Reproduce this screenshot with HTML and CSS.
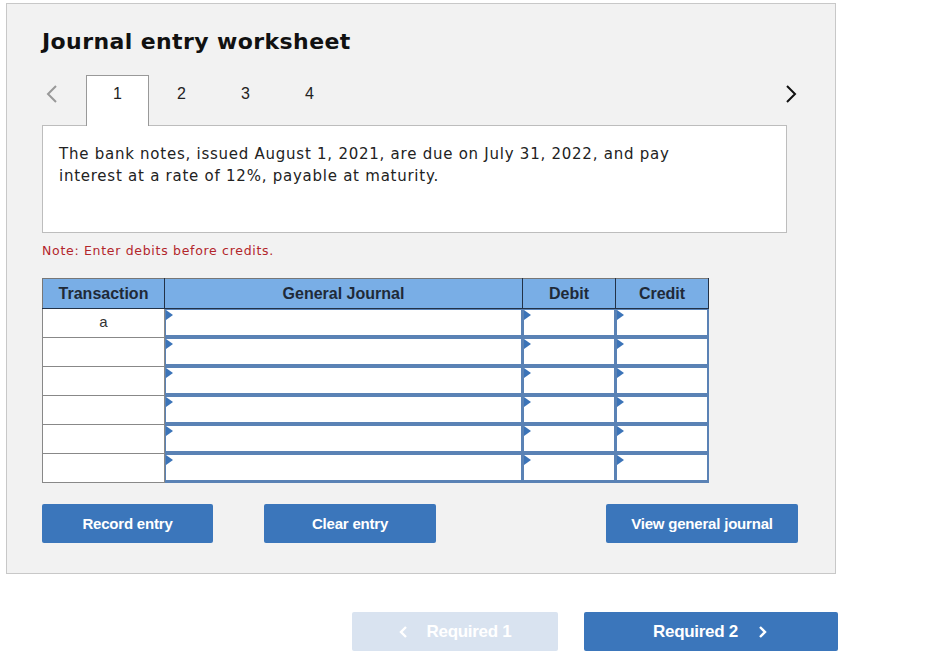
FILE: index.html
```html
<!DOCTYPE html>
<html lang="en">
<head>
    <meta charset="UTF-8">
    <title>Journal entry worksheet</title>
    <link rel="stylesheet" href="styles.css">
</head>
<body>

    <!-- Hoja de trabajo -->
    <div class="panel">
        <h1>Journal entry worksheet</h1>

        <div class="tabs">
            <span class="nav prev">
                <svg width="14" height="20" viewBox="0 0 14 20"><path d="M11 2 L3 10 L11 18" fill="none" stroke="#999" stroke-width="2"/></svg>
            </span>
            <span class="tab active">1</span>
            <span class="tab">2</span>
            <span class="tab">3</span>
            <span class="tab">4</span>
            <span class="nav next">
                <svg width="14" height="20" viewBox="0 0 14 20"><path d="M3 2 L11 10 L3 18" fill="none" stroke="#111" stroke-width="2"/></svg>
            </span>
        </div>

        <div class="question">
            The bank notes, issued August 1, 2021, are due on July 31, 2022, and pay<br>
            interest at a rate of 12%, payable at maturity.
        </div>

        <p class="note">Note: Enter debits before credits.</p>

        <table class="journal">
            <thead>
                <tr>
                    <th class="col-trans">Transaction</th>
                    <th class="col-account">General Journal</th>
                    <th class="col-amount">Debit</th>
                    <th class="col-amount">Credit</th>
                </tr>
            </thead>
            <tbody id="rows"></tbody>
        </table>

        <div class="actions">
            <button class="btn btn-record">Record entry</button>
            <button class="btn btn-clear">Clear entry</button>
            <button class="btn btn-view">View general journal</button>
        </div>
    </div>

    <!-- Navegación inferior -->
    <div class="bottom-nav">
        <button class="big-btn disabled">
            <svg width="10" height="14" viewBox="0 0 10 14"><path d="M7 2 L2 7 L7 12" fill="none" stroke="#fff" stroke-width="2.4"/></svg>
            <span>Required 1</span>
        </button>
        <button class="big-btn next-req">
            <span>Required 2</span>
            <svg width="10" height="14" viewBox="0 0 10 14"><path d="M3 2 L8 7 L3 12" fill="none" stroke="#fff" stroke-width="2.4"/></svg>
        </button>
    </div>

    <script>
        // Filas de la tabla
        const labels = ['a', '', '', '', '', ''];
        const rows = document.getElementById('rows');

        labels.forEach(label => {
            const tr = document.createElement('tr');
            tr.innerHTML = `
                <td class="trans">${label}</td>
                <td class="entry"><div class="field"></div></td>
                <td class="entry"><div class="field"></div></td>
                <td class="entry"><div class="field"></div></td>
            `;
            rows.appendChild(tr);
        });
    </script>

</body>
</html>
```

FILE: styles.css
```css
body {
    margin: 0;
    background-color: #fff;
    font-family: "Liberation Sans", Arial, sans-serif;
}

.panel {
    box-sizing: border-box;
    width: 830px;
    height: 571px;
    margin: 3px 0 0 6px;
    padding: 24px 0 0 35px;
    background-color: #f2f2f2;
    border: 1px solid #c8c8c8;
}

h1 {
    margin: 0;
    font-family: "DejaVu Sans", Verdana, sans-serif;
    font-size: 22px;
    font-weight: bold;
    color: #111;
    line-height: 28px;
    letter-spacing: 0.4px;
}

.tabs {
    display: flex;
    align-items: stretch;
    height: 50px;
    margin-top: 19px;
    width: 756px;
}

.nav {
    display: flex;
    align-items: flex-start;
    padding-top: 9px;
}

.prev {
    width: 44px;
    padding-left: 3px;
    box-sizing: border-box;
}

.next {
    margin-left: auto;
}

.tab {
    width: 63px;
    display: flex;
    justify-content: center;
    padding-top: 10px;
    box-sizing: border-box;
    font-size: 16px;
    color: #222;
    margin-right: 1px;
}

.tab.active {
    width: 63px;
    background-color: #fff;
    border: 1px solid #999;
    border-bottom: none;
    padding-top: 9px;
    margin-bottom: -1px;
    position: relative;
    z-index: 1;
}

.question {
    box-sizing: border-box;
    width: 745px;
    height: 108px;
    padding: 17px 16px;
    background-color: #fff;
    border: 1px solid #bdbdbd;
    font-family: "DejaVu Sans", Verdana, sans-serif;
    font-size: 15px;
    line-height: 22px;
    letter-spacing: 0.75px;
    color: #222;
}

.note {
    margin: 9px 0 0;
    font-family: "DejaVu Sans", Verdana, sans-serif;
    font-size: 12.5px;
    line-height: 18px;
    letter-spacing: 0.7px;
    color: #b2262b;
}

.journal {
    margin-top: 18px;
    border-collapse: collapse;
    width: 662px;
    table-layout: fixed;
}

.journal th {
    height: 29px;
    padding: 0;
    background-color: #79aee6;
    border: 1px solid #233247;
    border-top: 1px solid #777;
    font-size: 16px;
    font-weight: bold;
    color: #1f2a38;
    text-align: center;
}

.journal th:first-child {
    border-left: 1px solid #777;
}

.col-trans {
    width: 121px;
}

.col-account {
    width: 357px;
}

.col-amount {
    width: 92px;
}

.journal td {
    height: 28px;
    padding: 0;
}

.trans {
    background-color: #fff;
    border: 1px solid #888;
    text-align: center;
    vertical-align: top;
    font-size: 15px;
    color: #333;
    line-height: 26px;
}

.entry {
    background-color: #fff;
    border: 1px solid #5a82b5;
}

.field {
    position: relative;
    box-sizing: border-box;
    height: 28px;
    border: 1px solid #5a82b5;
    border-bottom-width: 2px;
}

.field::before {
    content: "";
    position: absolute;
    top: 0;
    left: 0;
    border-top: 5px solid transparent;
    border-bottom: 5px solid transparent;
    border-left: 7px solid #3c74b8;
}

.actions {
    display: flex;
    margin-top: 21px;
}

.btn {
    height: 39px;
    border: none;
    border-radius: 2px;
    background-color: #3b76bb;
    color: #fff;
    font-family: "Liberation Sans", Arial, sans-serif;
    font-size: 15px;
    font-weight: bold;
    letter-spacing: -0.2px;
    cursor: pointer;
}

.btn-record {
    width: 171px;
}

.btn-clear {
    width: 172px;
    margin-left: 51px;
}

.btn-view {
    width: 192px;
    margin-left: 170px;
}

.bottom-nav {
    display: flex;
    margin: 38px 0 0 352px;
}

.big-btn {
    display: flex;
    align-items: center;
    justify-content: center;
    gap: 17px;
    height: 39px;
    border: none;
    border-radius: 2px;
    background-color: #3b76bb;
    color: #fff;
    font-family: "Liberation Sans", Arial, sans-serif;
    font-size: 17px;
    font-weight: bold;
    letter-spacing: -0.3px;
}

.big-btn.disabled {
    width: 206px;
    background-color: #d9e3f0;
    gap: 18px;
}

.big-btn.next-req {
    width: 254px;
    margin-left: 26px;
    padding-left: 4px;
    gap: 19px;
}
```
